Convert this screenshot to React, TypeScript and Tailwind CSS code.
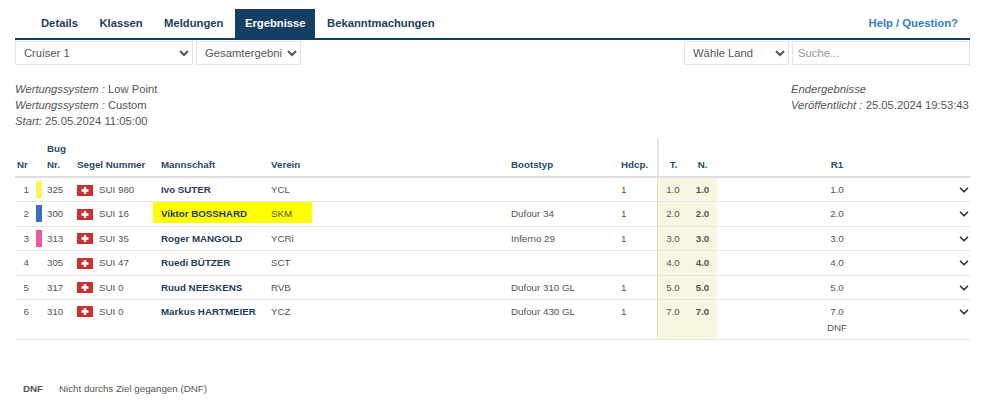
import { ChevronDown } from "lucide-react";

type Row = {
  nr: number;
  color?: string;
  bug: string;
  sail: string;
  first: string;
  last: string;
  club: string;
  boat: string;
  hdcp: string;
  total: string;
  note?: string;
  mark?: boolean;
};

const rows: Row[] = [
  { nr: 1, color: "bg-[#fdf25a]", bug: "325", sail: "SUI 980", first: "Ivo", last: "SUTER", club: "YCL", boat: "", hdcp: "1", total: "1.0" },
  { nr: 2, color: "bg-[#3b6cc4]", bug: "300", sail: "SUI 16", first: "Viktor", last: "BOSSHARD", club: "SKM", boat: "Dufour 34", hdcp: "1", total: "2.0", mark: true },
  { nr: 3, color: "bg-[#f0559e]", bug: "313", sail: "SUI 35", first: "Roger", last: "MANGOLD", club: "YCRi", boat: "Inferno 29", hdcp: "1", total: "3.0" },
  { nr: 4, bug: "305", sail: "SUI 47", first: "Ruedi", last: "BÜTZER", club: "SCT", boat: "", hdcp: "", total: "4.0" },
  { nr: 5, bug: "317", sail: "SUI 0", first: "Ruud", last: "NEESKENS", club: "RVB", boat: "Dufour 310 GL", hdcp: "1", total: "5.0" },
  { nr: 6, bug: "310", sail: "SUI 0", first: "Markus", last: "HARTMEIER", club: "YCZ", boat: "Dufour 430 GL", hdcp: "1", total: "7.0", note: "DNF" },
];

const tabs = ["Details", "Klassen", "Meldungen", "Ergebnisse", "Bekanntmachungen"];

const SwissFlag = () => (
  <svg width="16" height="11" viewBox="0 0 16 11" className="shrink-0">
    <rect width="16" height="11" fill="#c8322e" />
    <path d="M6.8 2h2.4v2.3h2.3v2.4H9.2V9H6.8V6.7H4.5V4.3h2.3z" fill="#fff" />
  </svg>
);

const selectClass =
  "h-[24px] border border-[#e4e4e4] bg-white pl-[4px] text-[11.25px] text-[#555]";
const th = "pt-[3px] pb-[3px] align-bottom border-b-2 border-[#dedede] font-bold text-left";
const td = "pt-1 pb-[3.4px] align-top border-b border-[#e8e8e8]";

export default function App() {
  return (
    <div className="w-[984px] h-[400px] overflow-hidden bg-white pl-[15px] pr-[14px] pt-[9px] font-['Liberation_Sans',Arial,sans-serif] text-[#555]">
      <div className="flex h-[31px] items-stretch border-b-2 border-[#143e64] pl-[15.25px] text-[11.25px] font-bold text-[#1f3d5a]">
        {tabs.map((t) => (
          <div
            key={t}
            className={`flex items-center pb-[1px] ${t === "Ergebnisse" ? "mx-[1px] bg-[#143e64] px-[9.75px] text-white" : "px-[10.75px]"}`}
          >
            {t}
          </div>
        ))}
        <div className="ml-auto flex items-center pr-[12px] pb-[1px] text-[#2f7fc8]">Help / Question?</div>
      </div>

      <div className="mt-[1px] flex">
        <select className={`${selectClass} w-[178px]`}>
          <option>Cruiser 1</option>
        </select>
        <select className={`${selectClass} ml-[3px] w-[105px] pr-[2px]`}>
          <option>Gesamtergebnisse</option>
        </select>
        <select className={`${selectClass} ml-auto w-[105px]`}>
          <option>Wähle Land</option>
        </select>
        <input
          placeholder="Suche..."
          className="ml-[3px] h-[24px] w-[178px] border border-[#e4e4e4] px-[5px] text-[11.25px] placeholder:text-[#999]"
        />
      </div>

      <div className="mt-[16px] flex justify-between text-[11.25px] leading-4">
        <div>
          <div><i>Wertungssystem :</i> Low Point</div>
          <div><i>Wertungssystem :</i> Custom</div>
          <div><i>Start:</i> 25.05.2024 11:05:00</div>
        </div>
        <div className="w-[179px]">
          <div><i>Endergebnisse</i></div>
          <div className="whitespace-nowrap"><i>Veröffentlicht :</i> 25.05.2024 19:53:43</div>
        </div>
      </div>

      <table className="mt-[9px] w-[955px] table-fixed border-separate border-spacing-0 text-[9.75px] leading-4">
        <colgroup>
          <col className="w-[21px]" />
          <col className="w-[6px]" />
          <col className="w-[31px]" />
          <col className="w-[80px]" />
          <col className="w-[110px]" />
          <col className="w-[240px]" />
          <col className="w-[110px]" />
          <col className="w-[44px]" />
          <col className="w-[31px]" />
          <col className="w-[29px]" />
          <col className="w-[237px]" />
          <col className="w-[16px]" />
        </colgroup>
        <thead className="text-[#2b4a66]">
          <tr>
            <th className={`${th} pl-[2px]`}>Nr</th>
            <th className={th} />
            <th className={`${th} pl-[5px]`}>Bug<br />Nr.</th>
            <th className={`${th} pl-[4px]`}>Segel Nummer</th>
            <th className={`${th} pl-2`}>Mannschaft</th>
            <th className={`${th} pl-2`}>Verein</th>
            <th className={`${th} pl-2`}>Bootstyp</th>
            <th className={`${th} pl-2`}>Hdcp.</th>
            <th className={`${th} border-l-2 border-l-[#e4e4e4] !text-center`}>T.</th>
            <th className={`${th} !text-center`}>N.</th>
            <th className={`${th} pl-[3px] !text-center`}>R1</th>
            <th className={th} />
          </tr>
        </thead>
        <tbody>
          {rows.map((r) => (
            <tr key={r.nr}>
              <td className={`${td} pr-[7px] text-right`}>{r.nr}</td>
              <td className={`${td} !pt-[3px]`}>
                {r.color && <span className={`block h-[17px] w-[6px] ${r.color}`} />}
              </td>
              <td className={`${td} pl-[5px]`}>{r.bug}</td>
              <td className={`${td} pl-[4px]`}>
                <div className="flex items-center gap-[6px]">
                  <SwissFlag />
                  <span>{r.sail}</span>
                </div>
              </td>
              <td className={`${td} font-bold text-[#1f3d5a] ${r.mark ? "!p-0" : "pl-2"}`}>
                {r.mark ? (
                  <div className="h-[21px] bg-[#ffff00] pl-2 pt-1">{r.first} {r.last}</div>
                ) : (
                  `${r.first} ${r.last}`
                )}
              </td>
              <td className={`${td} ${r.mark ? "!p-0" : "pl-2"}`}>
                {r.mark ? (
                  <div className="h-[21px] w-[49px] bg-[#ffff00] pl-2 pt-1">{r.club}</div>
                ) : (
                  r.club
                )}
              </td>
              <td className={`${td} pl-2`}>{r.boat}</td>
              <td className={`${td} pl-[8px]`}>{r.hdcp}</td>
              <td className={`${td} border-l border-l-[#e2e2c8] bg-[#f7f7e1] text-center`}>{r.total}</td>
              <td className={`${td} bg-[#f7f7e1] text-center font-bold`}>{r.total}</td>
              <td className={`${td} pl-[3px] text-center`}>
                {r.total}
                {r.note && <div>{r.note}</div>}
              </td>
              <td className={td}>
                <ChevronDown size={14} strokeWidth={3} className="-mr-[1px] ml-auto mt-[1px] text-[#333]" />
              </td>
            </tr>
          ))}
        </tbody>
      </table>

      <div className="mt-[41px] flex pl-2 text-[9.75px] leading-4">
        <b className="w-[36px]">DNF</b>
        <span>Nicht durchs Ziel gegangen (DNF)</span>
      </div>
    </div>
  );
}
